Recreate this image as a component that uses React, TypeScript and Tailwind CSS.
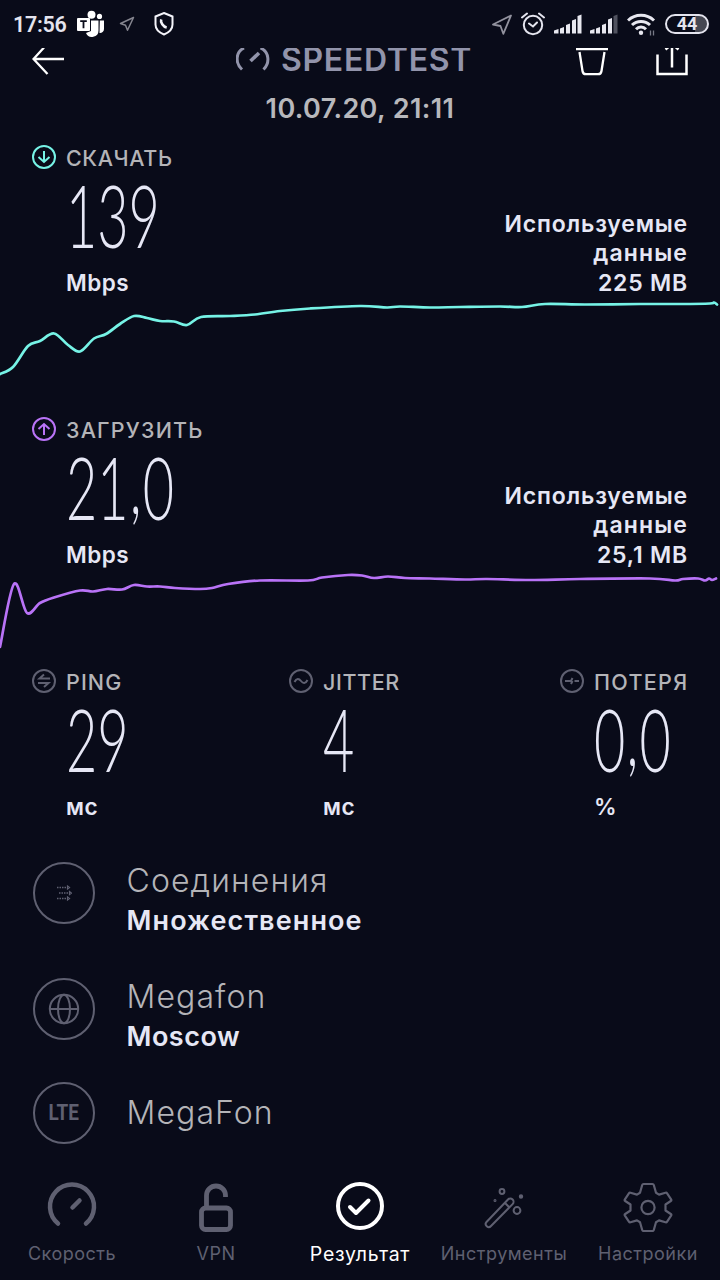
import React from 'react';

type Point = [number, number];

// Catmull-Rom spline through the samples, written as cubic beziers
function smoothPath(points: Point[]) {
  let d = `M${points[0][0]} ${points[0][1]}`;
  for (let i = 0; i < points.length - 1; i++) {
    const p0 = points[i - 1] ?? points[i];
    const p1 = points[i];
    const p2 = points[i + 1];
    const p3 = points[i + 2] ?? p2;
    d += ` C${p1[0] + (p2[0] - p0[0]) / 6} ${p1[1] + (p2[1] - p0[1]) / 6} ${p2[0] - (p3[0] - p1[0]) / 6} ${p2[1] - (p3[1] - p1[1]) / 6} ${p2[0]} ${p2[1]}`;
  }
  return d;
}

const DOWNLOAD: Point[] = [
  [0, 79], [13, 72], [28, 51], [40, 46], [54, 38.5], [68, 50], [80, 56.5], [94, 43.5], [106, 39], [120, 29],
  [134, 21], [147, 23], [160, 26], [174, 26.5], [187, 30], [201, 22], [230, 21], [255, 19.5], [280, 16], [310, 13.5],
  [360, 11], [387, 12.5], [400, 11.5], [430, 12.5], [460, 12], [500, 11.5], [522, 12], [545, 9], [585, 9.5],
  [640, 9], [680, 9], [710, 8.5], [714, 7.5], [717, 9.5],
];

const UPLOAD: Point[] = [
  [0, 80], [14, 17], [27, 46], [40, 36], [54, 30.5], [80, 23.5], [93, 24.5], [107, 22], [122, 22.5], [134, 18],
  [147, 19.5], [160, 19.5], [175, 21], [200, 22], [212, 21], [228, 17], [260, 13.5], [308, 13.5], [322, 10.5],
  [348, 8], [362, 8.5], [374, 11], [388, 9.5], [405, 11], [430, 11.5], [465, 12.5], [487, 12], [530, 13],
  [580, 12], [650, 11.5], [675, 13.5], [683, 12], [698, 11.5], [705, 13.5], [709, 11.5], [712, 13], [716, 11.5],
];

function StatusBar() {
  return (
    <div className="flex h-12 items-center text-[#e4e4ee]">
      <span className="ml-[13px] w-16 pt-[2px] font-[Roboto] text-[21.5px] font-semibold leading-none tracking-[-0.3px]">17:56</span>
      <svg className="h-7 w-7" viewBox="0 0 28 28">
        <g fill="#fff">
          <circle cx="14.500" cy="4.800" r="4" />
          <circle cx="22.500" cy="6.400" r="2.600" />
          <path d="M14 10.500h7.500v10a6.500 6.500 0 0 1-12.500 2.500l5-2zM22.800 10.500H27v8.500a4 4 0 0 1-4.500 4z" />
          <rect x="0" y="8" width="13" height="13" rx="1" />
        </g>
        <path d="M3.200 11.200h6.600M6.500 11.200v7" stroke="#090b19" strokeWidth="1.800" />
      </svg>
      <svg className="ml-[14px] h-4 w-4" viewBox="0 0 16 16" fill="none" stroke="#85858f" strokeWidth="1.5" strokeLinejoin="round">
        <path d="M14.500 1.500L1.500 7.500l5 1.700 2 5z" />
      </svg>
      <svg className="ml-[17px] h-6 w-6" viewBox="0 0 24 24" fill="none" stroke="#f4f4fa" strokeWidth="2">
        <path d="M12 1l8.500 3.500v8c0 4.500-3.500 8-8.500 10C7 20.500 3.500 17 3.500 12.500v-8z" />
        <path d="M9.200 7.300c-1 3 2 7.500 5.500 8.200" strokeWidth="2.600" />
      </svg>

      <div className="ml-auto mr-[11px] flex items-center">
        <svg className="h-6 w-[22px]" viewBox="0 0 22 24" fill="none" stroke="#92929e" strokeWidth="1.800" strokeLinejoin="round">
          <path d="M20 3.500L2 12.500l7.500 1.500 2.800 7.800z" />
        </svg>
        <svg className="ml-[8px] h-6 w-6" viewBox="0 0 24 24" fill="none" stroke="#e4e4ee" strokeWidth="2">
          <circle cx="12" cy="13" r="9.200" />
          <path d="M8 11.500l4 3 4-4M1 5.500l5-4M23 5.500l-5-4" strokeLinecap="round" />
        </svg>
        <svg className="ml-[9px] h-6 w-7" viewBox="0 0 28 24" fill="#e8e8f0">
          <path d="M0 18.500L4.500 17v4.500H0zM6 16.500L10 15v6.500H6zM12 13l4-1.500v10h-4zM18 8.500L22 7v14.500h-4zM23.500 4l4-1.500v19h-4z" />
        </svg>
        <svg className="ml-[8px] h-6 w-7" viewBox="0 0 28 24" fill="#e8e8f0">
          <path d="M0 18.500L4.500 17v4.500H0zM6 16.500L10 15v6.500H6zM12 13l4-1.500v10h-4zM18 7.500L22 6v15.500h-4z" />
          <path d="M23.500 4L27.500 2.500v19h-4z" fill="#50525f" />
        </svg>
        <svg className="ml-[9px] h-6 w-[29px]" viewBox="0 0 29 24" fill="none" stroke="#e8e8f0" strokeWidth="3">
          <path d="M1 8.500a19 19 0 0 1 26 0M5 13a13 13 0 0 1 18 0M9 17.200a7 7 0 0 1 10 0" />
          <circle cx="14" cy="20.800" r="2.200" fill="#e8e8f0" stroke="none" />
          <path d="M23.500 18.500v5M26.500 18.500v5" stroke="#777986" strokeWidth="1.300" />
        </svg>
        <div className="ml-[9px] flex h-[20px] w-[44px] items-center justify-center rounded-full border-2 border-[#e4e4ee] bg-linear-to-r from-transparent from-70% to-[#454752] to-70% font-[Roboto] text-[18px] font-bold leading-none">
          44
        </div>
      </div>
    </div>
  );
}

function Header() {
  return (
    <header className="flex h-9 items-start overflow-hidden">
      <svg className="ml-8 h-9 w-8" viewBox="0 0 32 36" fill="none" stroke="#fff" strokeWidth="2.300">
        <path d="M12 -.5L1.500 11l14 15M1.500 11H32" />
      </svg>
      <div className="ml-[172px] flex items-start text-[#9294ab]">
        <svg className="h-9 w-[34px]" viewBox="0 0 34 36" fill="none" stroke="currentColor" strokeWidth="3">
          <path d="M8 0C-.5 4-1 15 6 21.500M24.500 0C33.500 4 34 15 27.500 21.500" />
          <path d="M14.500 13L23 5" strokeWidth="3.600" />
        </svg>
        <span className="ml-[11px] h-6 text-[32px] font-semibold leading-6 tracking-[0.7px]">SPEEDTEST</span>
      </div>
      <svg className="ml-auto h-9 w-8" viewBox="0 0 32 36" fill="none" stroke="#fff" strokeWidth="2.300">
        <path d="M0 1h32M3.500 4l3 19c.3 2 1.500 3.200 3.500 3.200h12c2 0 3.200-1.200 3.500-3.200l3-19" />
      </svg>
      <svg className="ml-12 mr-8 h-9 w-8" viewBox="0 0 32 36" fill="none" stroke="#fff" strokeWidth="2.500">
        <path d="M1.500 6.500v19.500h29V6.500M16 0v19.500M9.500 1.500L13-1.500M22.500 1.500L19-1.500" />
      </svg>
    </header>
  );
}

interface MetricProps {
  icon: React.ReactNode;
  label: string;
  value: string;
  unit: string;
  labelClass?: string;
}

function Metric({ icon, label, value, unit, labelClass = 'tracking-[0.6px]' }: MetricProps) {
  const [whole, fraction] = value.split(',');
  return (
    <div className="flex gap-[10px]">
      <svg className="mt-[1px] h-6 w-6 shrink-0" viewBox="0 0 24 24" fill="none" strokeWidth="2">
        {icon}
      </svg>
      <div className="whitespace-nowrap">
        <div className={`h-[26px] pt-[2px] text-[21.5px] font-medium leading-6 text-[#b4b4b8] ${labelClass}`}>{label}</div>
        <div className="h-[92px] w-0 origin-left scale-x-[0.62] font-[Lato] text-[87px] font-light leading-[90px]">
          {whole}
          {fraction && <span className="relative -top-1.5 px-[2px]">,</span>}
          {fraction}
        </div>
        <div className="mt-[9px] h-6 text-[22.5px] font-semibold leading-6 tracking-[0.5px]">{unit}</div>
      </div>
    </div>
  );
}

function Transfer({ data, points, stroke, ...metric }: MetricProps & { data: string; points: Point[]; stroke: string }) {
  return (
    <section className="pt-3">
      <div className="flex items-end justify-between px-8">
        <Metric {...metric} />
        <div className="relative top-[3px] w-[200px] whitespace-nowrap text-right text-[23px] font-semibold leading-[29.5px]">
          <span className="tracking-[0.8px]">Используемые</span>
          <br />
          <span className="tracking-[1.1px]">данные</span>
          <br />
          <span className="tracking-[0.8px]">{data}</span>
        </div>
      </div>
      <svg className="block h-[85px] w-full" viewBox="0 0 720 85" fill="none" stroke={stroke} strokeWidth="2.700">
        <path d={smoothPath(points)} strokeLinecap="round" />
      </svg>
    </section>
  );
}

interface InfoRowProps {
  icon: React.ReactNode;
  title: string;
  value?: string;
  valueClass?: string;
}

function InfoRow({ icon, title, value, valueClass = '' }: InfoRowProps) {
  return (
    <div className="flex items-start gap-[30.5px] px-8">
      <div className="flex h-16 w-16 shrink-0 items-center justify-center">
        <div className="flex h-[62px] w-[62px] items-center justify-center rounded-full border-2 border-[#5f6071] text-[#5f6071]">{icon}</div>
      </div>
      <div className={value ? '' : 'pt-[12px]'}>
        <div className="h-10 text-[32px] font-light leading-10 tracking-[1.1px] text-[#b4b4b8]">{title}</div>
        {value && <div className={`h-10 text-[27px] font-semibold leading-10 ${valueClass}`}>{value}</div>}
      </div>
    </div>
  );
}

function NavItem({ icon, label, active }: { icon: React.ReactNode; label: string; active?: boolean }) {
  return (
    <div className={`flex flex-1 flex-col items-center ${active ? 'text-white' : 'text-[#5f6071]'}`}>
      <svg className="h-[50px] w-[50px]" viewBox="0 0 50 50" fill="none" stroke="currentColor" strokeLinecap="round" strokeLinejoin="round">
        {icon}
      </svg>
      <span className={`mt-[10px] h-6 whitespace-nowrap leading-6 ${active ? 'text-[19.5px] tracking-[0.7px]' : 'text-[18px] tracking-[0.5px]'}`}>
        {label}
      </span>
    </div>
  );
}

export default function App() {
  return (
    <div className="flex h-[1280px] w-[720px] flex-col overflow-hidden bg-[#090b19] font-[Inter,sans-serif] text-[#e6e7f5]">
      <StatusBar />
      <Header />
      <div className="h-12 pt-px text-center text-[27px] font-semibold leading-[48px] tracking-[0.4px] text-[#b8b8bc]">10.07.20, 21:11</div>

      <div className="h-[272px]">
        <Transfer
          icon={<g stroke="#76f3e6"><circle cx="12" cy="12" r="11" /><path d="M12 6v11M6.500 12l5.500 5 5.500-5" /></g>}
          label="СКАЧАТЬ"
          value="139"
          unit="Mbps"
          data="225 MB"
          points={DOWNLOAD}
          stroke="#76f3e6"
        />
      </div>
      <div className="h-[252px]">
        <Transfer
          icon={<g stroke="#b973f7"><circle cx="12" cy="12" r="11" /><path d="M12 18V7M6.500 12L12 7l5.500 5" /></g>}
          label="ЗАГРУЗИТЬ"
          labelClass="tracking-[1.2px]"
          value="21,0"
          unit="Mbps"
          data="25,1 MB"
          points={UPLOAD}
          stroke="#b973f7"
        />
      </div>

      <section className="grid grid-cols-[257px_271px_auto] px-8 pt-3">
        <Metric
          icon={<g stroke="#5f6071"><circle cx="12" cy="12" r="11" /><path d="M18 9.500H7.500L12 5.500M6 14h10.500L12 18" /></g>}
          label="PING"
          labelClass="tracking-[1.1px]"
          value="29"
          unit="мс"
        />
        <Metric
          icon={<g stroke="#5f6071"><circle cx="12" cy="12" r="11" /><path d="M5.500 13c2-4 4.500-3.500 6.500-1s4.500 3 6.500-1" /></g>}
          label="JITTER"
          value="4"
          unit="мс"
        />
        <Metric
          icon={<g stroke="#5f6071"><circle cx="12" cy="12" r="11" /><path d="M5 12h4M9 12h2l1.500-3M11 15l1.500-3M14.500 12H19" /></g>}
          label="ПОТЕРЯ"
          labelClass="tracking-[1.3px]"
          value="0,0"
          unit="%"
        />
      </section>

      <section className="mt-[42px]">
        <div className="h-[116px]">
          <InfoRow
            icon={
              <svg className="h-4 w-4" viewBox="0 0 16 16" fill="none" stroke="currentColor" strokeWidth="1.500">
                <path d="M1 2.500h11M3 8h11M1 13.500h11" strokeDasharray="1.500 1" />
                <path d="M11.500 1v3l2-1.500zM13.500 6.500v3l2-1.500zM11.500 12v3l2-1.500z" strokeWidth="1.200" />
              </svg>
            }
            title="Соединения"
            value="Множественное"
            valueClass="tracking-[1.1px]"
          />
        </div>
        <div className="h-[104px]">
          <InfoRow
            icon={
              <svg className="h-8 w-8" viewBox="0 0 32 32" fill="none" stroke="currentColor" strokeWidth="2">
                <circle cx="16" cy="16" r="14.200" />
                <ellipse cx="16" cy="16" rx="6" ry="14.200" />
                <path d="M2 16h28" />
              </svg>
            }
            title="Megafon"
            value="Moscow"
            valueClass="tracking-[0.5px]"
          />
        </div>
        <div className="h-[101px]">
          <InfoRow
            icon={<span className="scale-x-[0.86] font-[Roboto] text-[22px] font-bold leading-none">LTE</span>}
            title="MegaFon"
          />
        </div>
      </section>

      <nav className="flex">
        <NavItem
          label="Скорость"
          icon={<><path d="M11 41.500a22 22 0 1 1 28 0" strokeWidth="4.500" /><path d="M25.500 25.500l7-7" strokeWidth="4.500" /></>}
        />
        <NavItem
          label="VPN"
          icon={<g strokeWidth="4.800"><rect x="10.500" y="26" width="29" height="21.500" rx="4" /><path d="M15.500 26V13.500a9.500 9.500 0 0 1 19 0V15" strokeLinecap="butt" /></g>}
        />
        <NavItem
          active
          label="Результат"
          icon={<g strokeWidth="4"><circle cx="25" cy="24" r="22" /><path d="M15 25l6 6 12.500-12.500" /></g>}
        />
        <NavItem
          label="Инструменты"
          icon={
            <g strokeWidth="2">
              <path d="M7.500 40L29 17.500a3.200 3.200 0 0 1 4.600 4.600L12 44a3 3 0 0 1-4.500-4zM26 21l4 4" />
              <circle cx="23" cy="9.500" r="2.400" />
              <circle cx="38" cy="28.500" r="3.400" />
              <circle cx="42" cy="14.500" r="1.200" fill="currentColor" />
              <circle cx="16" cy="18.500" r=".5" fill="currentColor" />
            </g>
          }
        />
        <NavItem
          label="Настройки"
          icon={
            <g strokeWidth="2.200">
              <path d="M20.500 2h9q1 0 1.300 1L33 10.800l3 1.800 6.500-1.800q1-.3 1.600.6l4 6q.6 1-.3 1.600L42.500 22.500v6l5.300 3.500q.9.600.3 1.600l-4 6q-.6.900-1.600.6L36 38.400l-3 1.800L30.800 48q-.3 1-1.300 1h-9q-1 0-1.300-1L17 40.200l-3-1.800-6.500 1.800q-1 .3-1.600-.6l-4-6q-.6-1 .3-1.600l5.300-3.500v-6L2.200 19q-.9-.6-.3-1.600l4-6q.6-.9 1.600-.6L14 12.600l3-1.800L19.200 3q.3-1 1.300-1z" />
              <circle cx="25" cy="25.500" r="6.600" />
            </g>
          }
        />
      </nav>
    </div>
  );
}
